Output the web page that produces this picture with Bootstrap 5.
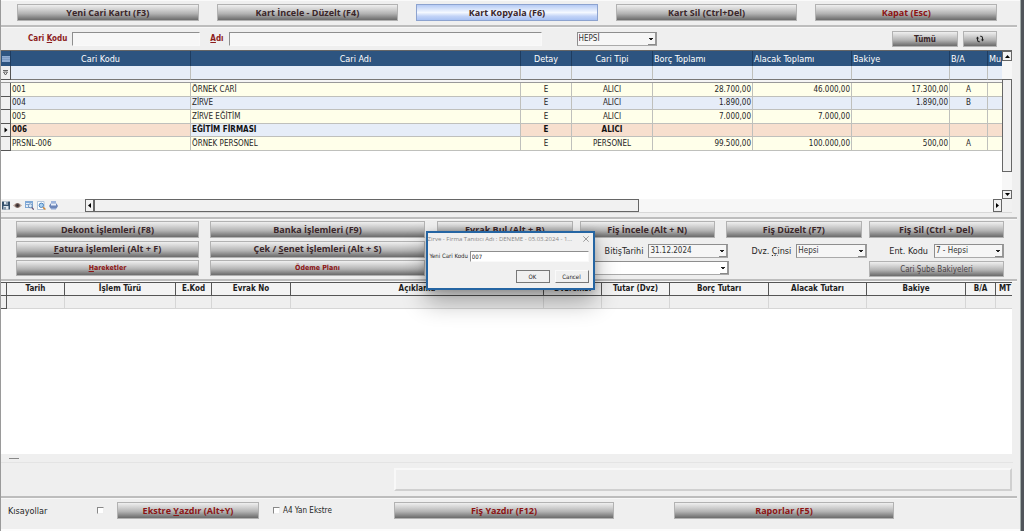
<!DOCTYPE html>
<html lang="tr">
<head>
<meta charset="utf-8">
<meta name="viewport" content="width=device-width, initial-scale=1">
<title>Cari Kartlar</title>
<link href="https://cdn.jsdelivr.net/npm/bootstrap@5.3.0/dist/css/bootstrap.min.css" rel="stylesheet">
<style>
:root{--ui:"DejaVu Sans Condensed","DejaVu Sans",sans-serif;--cap:"Open Sans","Noto Sans",sans-serif}
body{font-family:var(--ui);font-size:8px;line-height:12px;color:#262626;background:#efefef}
.app{border-left:1px solid #9a9a9a;border-right:3px solid #50555a;box-shadow:inset -1px 0 #a3adab,inset 0 -2px #fcfcfc,inset 0 1px #fafafa}
.rule{height:3px;margin-right:4px;border-top:2px solid #bdbdbd;border-bottom:1px solid #f8f8f8;flex:none}
/* metallic push buttons */
.metal{font:700 9px/14px var(--cap);height:17px;padding:0;border:1px solid #b2b2b2;border-radius:0;color:#3a2629;
 background:linear-gradient(#efefef,#d6d6d6 25%,#b2b2b2 58%,#7e7e7e 88%,#6c6c6c);white-space:nowrap;overflow:hidden}
.metal:hover{color:#3a2629;border-color:#999}
.metal.red,.metal.red:hover{color:#8c1414}
.metal.blue{background:linear-gradient(#b6cbf5,#dbe6fb 30%,#f4f8ff 50%,#c2d3f7 75%,#a9c2f3);border-color:#8da3cf}
.metal.thin{font:700 7px/13px var(--ui);height:16px}
.metal.plain{font-weight:400;font-size:8px;color:#4a4245}
.metal.mid{font-size:8px}
.top-grid{display:grid;grid-template-columns:repeat(5,1fr);column-gap:18px;padding:4px 24px 4px 16px}
/* sunken fields */
.field,.pick{height:14px;padding:0 1px;font:8px/12px var(--ui);color:#333;background:#f7f7f7;border:1px solid #8e8e8e;border-right-color:#f9f9f9;border-bottom-color:#f9f9f9;border-radius:0;min-width:0;outline:0}
.pick{appearance:none;border-right-color:#999;border-bottom-color:#aaa;
 background:linear-gradient(#222,#222) right 3px top 5px/4px 1px no-repeat,linear-gradient(#222,#222) right 4px top 6px/2px 1px no-repeat,linear-gradient(#888,#888) right 0 bottom 0/8px 1px no-repeat,linear-gradient(#999,#999) right 0 top 0/1px 100% no-repeat,#f6f6f6}
.pick.white{background-color:#fff}
.lbl{white-space:nowrap}
.lbl-red{font-weight:700;color:#8c1c1c}
.lbl-9{font-size:9px}
/* account list */
.list-pane{display:grid;grid-template-columns:minmax(0,1fr) 10px;grid-template-rows:148px 13px;margin-right:9px;border-top:1px solid #666;border-bottom:1px solid #d8d8d8}
.sheet{width:100%;table-layout:fixed;border-collapse:separate;border-spacing:0}
.sheet th,.sheet td{padding:0 1px;overflow:hidden;white-space:nowrap;height:13px;line-height:12px;border-right:1px solid #bfc0bc;border-bottom:1px solid #bfc0bc}
.sheet th:last-child,.sheet td:last-child{border-right:0}
.accounts th{height:15px;line-height:14px;font-size:9px;font-weight:400;color:#fff;background:#2d5480;border-color:#1e3c60;border-bottom-width:0}
.accounts .sift td{height:14px;background:#e6edf8;border-bottom-color:#777}
.accounts .gap td{height:3px;background:#f5f5f5;border-right:0;line-height:1px;border-bottom-color:#999}
.accounts tbody tr:nth-child(odd){background:#ffffea}
.accounts tbody tr:nth-child(even){background:#e6edf8}
.accounts tbody td{line-height:13px;height:14px}
.accounts tbody tr:nth-child(even) td{height:13px;line-height:12px}
.accounts tbody tr.now td{background:#f7dfce;font-weight:700;color:#111}
.accounts tbody tr.now td.cool{background:#e6edf8}
.sheet td.knob,.accounts tbody tr.now td.knob{background:#f0f0f0;border-color:#555;padding:0;text-align:center;font-size:6px}
.sheet svg,.tools svg,.sb svg{display:block;margin:auto}
.sb{display:flex;align-items:center;border:1px solid #666;background:#f1f1f1;flex:none;padding:0}
.tools{background:#f1f1f1}
/* movements */
.acts{display:grid;grid-template-columns:183px 215px;gap:2px 11px;flex:none}
.quad{display:flex;gap:7px}
.quad .metal{flex:1 1 0}
.moves th{height:13px;line-height:12px;font-weight:700;color:#1c1c1c;background:#f3f3f3;text-align:center;border-color:#555}
.moves td{background:#efefef;border-color:#d6d6d6}
.groove{height:23px;border:2px solid #d0d0d0;border-top-color:#f8f8f8;border-left-color:#f8f8f8}
.tick{appearance:none;width:7px;height:7px;margin:0;background:#fff;border:1px solid #888;border-right-color:#eee;border-bottom-color:#eee;border-radius:0}
/* dialog */
.ask{position:absolute;top:231px;left:0;right:2px;width:169px;margin:0 auto;background:#f0f0f0;border:2px solid #2565a3;box-shadow:0 12px 24px rgba(0,0,0,.32),0 2px 8px rgba(0,0,0,.2);font-size:6px;z-index:5}
.ask header{font:6px/12px var(--cap);color:#888}
.ask .field{height:11px;font-size:6px;line-height:9px;background:#fff;color:#222}
.ask .btn{font:6px/10px var(--ui);height:13px;width:34px;padding:0;border-radius:0;background:#f0f0f0;color:#222;border:1px solid #fafafa;border-right-color:#777;border-bottom-color:#777}
.ask .btn.main{border-color:#777}
</style>
</head>
<body>
<div class="app min-vh-100 d-flex flex-column position-relative overflow-hidden">
  <nav class="top-grid">
    <button class="btn metal">Yeni Cari Kartı (F3)</button>
    <button class="btn metal">Kart İncele - Düzelt (F4)</button>
    <button class="btn metal blue">Kart Kopyala (F6)</button>
    <button class="btn metal">Kart Sil (Ctrl+Del)</button>
    <button class="btn metal red">Kapat (Esc)</button>
  </nav>
  <div class="rule"></div>
  <form class="d-flex align-items-center" style="padding:3px 24px 3px 27px">
    <label class="lbl lbl-red" for="kod">Cari <u>K</u>odu</label>
    <input id="kod" class="field" style="width:128px;margin-left:5px">
    <label class="lbl lbl-red" for="adi" style="margin-left:10px"><u>A</u>dı</label>
    <input id="adi" class="field" style="width:313px;margin-left:5px">
    <select class="pick" aria-label="Cari tipi" style="width:80px;margin-left:35px"><option>HEPSİ</option></select>
    <button type="button" class="btn metal thin mid ms-auto" style="width:66px">Tümü</button>
    <button type="button" class="btn metal thin" style="width:34px;margin-left:5px" aria-label="Yenile">
      <svg width="8" height="8" viewBox="0 0 8 8" fill="none" stroke="#1d1d1d" stroke-width="1.1" class="d-block mx-auto"><path d="M3.800 6.700H3Q1.500 6.500 1.500 5V3M4.200 1.300H5Q6.500 1.500 6.500 3v2"/><path d="M0 3.500 1.500 1.500 3 3.500zM5 4.500 6.500 6.500 8 4.500z" fill="#1d1d1d" stroke="none"/></svg>
    </button>
  </form>

  <section class="list-pane">
    <div class="bg-white overflow-hidden">
      <table class="sheet accounts">
        <colgroup><col style="width:10px"><col style="width:180px"><col><col style="width:51px"><col style="width:81px"><col style="width:100px"><col style="width:99px"><col style="width:98px"><col style="width:38px"><col style="width:14px"></colgroup>
        <thead>
          <tr><th class="p-0"><svg width="8" height="6" viewBox="0 0 8 6"><path fill="#8fabd0" d="M0 0h8v6H0z"/><path stroke="#7b9ac3" d="M0 1.500h8M0 3.500h8"/></svg></th><th class="text-center">Cari Kodu</th><th class="text-center">Cari Adı</th><th class="text-center">Detay</th><th class="text-center">Cari Tipi</th><th>Borç Toplamı</th><th>Alacak Toplamı</th><th>Bakiye</th><th>B/A</th><th>Mu</th></tr>
          <tr class="sift"><td class="knob"><svg width="5" height="6" viewBox="0 0 5 6" fill="none" stroke="#444" stroke-width=".8"><path d="M0 .5h5M.5 2h4L2.500 5z"/></svg></td><td></td><td></td><td></td><td></td><td></td><td></td><td></td><td></td><td></td></tr>
          <tr class="gap"><td colspan="10"></td></tr>
        </thead>
        <tbody>
          <tr><td class="knob"></td><td>001</td><td>ÖRNEK CARİ</td><td class="text-center">E</td><td class="text-center">ALICI</td><td class="text-end">28.700,00</td><td class="text-end">46.000,00</td><td class="text-end">17.300,00</td><td class="text-center">A</td><td></td></tr>
          <tr><td class="knob"></td><td>004</td><td>ZİRVE</td><td class="text-center">E</td><td class="text-center">ALICI</td><td class="text-end">1.890,00</td><td></td><td class="text-end">1.890,00</td><td class="text-center">B</td><td></td></tr>
          <tr><td class="knob"></td><td>005</td><td>ZİRVE EĞİTİM</td><td class="text-center">E</td><td class="text-center">ALICI</td><td class="text-end">7.000,00</td><td class="text-end">7.000,00</td><td></td><td></td><td></td></tr>
          <tr class="now"><td class="knob"><svg width="4" height="6" viewBox="0 0 4 6"><path d="M.5.5v5L3.500 3z"/></svg></td><td>006</td><td class="cool">EĞİTİM FİRMASI</td><td class="text-center">E</td><td class="text-center">ALICI</td><td></td><td></td><td></td><td></td><td></td></tr>
          <tr><td class="knob"></td><td>PRSNL-006</td><td>ÖRNEK PERSONEL</td><td class="text-center">E</td><td class="text-center">PERSONEL</td><td class="text-end">99.500,00</td><td class="text-end">100.000,00</td><td class="text-end">500,00</td><td class="text-center">A</td><td></td></tr>
        </tbody>
      </table>
    </div>
    <div class="d-flex flex-column" style="background:#f7f7f7">
      <div class="sb" style="height:10px"><svg width="5" height="3" viewBox="0 0 5 3"><path d="M0 3h5L2.500 0z"/></svg></div>
      <div class="sb" style="height:93px;margin-top:18px"></div>
      <div class="sb mt-auto" style="height:9px"><svg width="5" height="3" viewBox="0 0 5 3"><path d="M0 0h5L2.500 3z"/></svg></div>
    </div>
    <div class="d-flex" style="background:#f7f7f7">
      <div class="tools d-flex align-items-center" style="width:84px;gap:3px;padding-left:1px">
        <svg width="8" height="9" viewBox="0 0 8 9" class="m-0"><path fill="#34506c" d="M0 .5h8v8H0z"/><path fill="#dfe8f1" d="M2 .5h4v3H2zM1.500 5h5v3.500h-5z"/><path fill="#34506c" d="M4.500 1h1v2h-1zM2.500 6h1v2.500h-1z"/></svg>
        <svg width="9" height="7" viewBox="0 0 9 7" class="m-0"><path fill="#b9a59b" d="M0 3.500Q4.500-1.500 9 3.500 4.500 8 0 3.500z"/><circle cx="4.500" cy="3.500" r="2.300" fill="#5d4a48"/><circle cx="4.500" cy="3.500" r="1" fill="#26262e"/></svg>
        <svg width="9" height="9" viewBox="0 0 9 9" class="m-0"><path fill="#7fa8d6" d="M0 0h8v7H0z"/><path fill="#e5eef8" d="M1 2h6v1H1zM1 4h3v2H1z"/><circle cx="5.300" cy="4.800" r="2" fill="#dcebf8" stroke="#5f82ad" stroke-width=".8"/><path stroke="#6b5a78" stroke-width="1.300" d="m6.800 6.500 2 2.200"/></svg>
        <svg width="9" height="9" viewBox="0 0 9 9" class="m-0"><path fill="#fff" stroke="#9fb6d1" stroke-width=".8" d="M.5.5h6.500v8H.5z"/><circle cx="4.300" cy="4.300" r="2.200" fill="#a9d0f0" stroke="#4d83bd"/><path stroke="#cf8a3c" stroke-width="1.400" d="m6 6.200 2.400 2.400"/></svg>
        <svg width="9" height="9" viewBox="0 0 9 9" class="m-0"><path fill="#9db4dc" d="M2 0h5v3H2z"/><path fill="#6c85b8" d="M1.500 2.500h6L9 5 7.500 7.500h-6L0 5z"/><path fill="#e9effa" d="M2 2.500h5v2H2z"/><path fill="#8ea4d0" d="M2 7h5v1.500H2z"/></svg>
      </div>
      <div class="sb" style="width:9px"><svg width="3" height="5" viewBox="0 0 3 5"><path d="M3 0v5L0 2.500z"/></svg></div>
      <div class="sb" style="width:54.400%"></div>
      <div class="sb ms-auto" style="width:9px"><svg width="3" height="5" viewBox="0 0 3 5"><path d="M0 0v5l3-2.500z"/></svg></div>
    </div>
    <div style="background:#f1f1f1"></div>
  </section>

  <div class="rule" style="margin-top:4px"></div>
  <section class="d-flex" style="padding:1px 17px 2px 15px;gap:12px">
    <div class="acts">
      <button class="btn metal">Dekont İşlemleri (F8)</button>
      <button class="btn metal">Banka İşlemleri (F9)</button>
      <button class="btn metal"><u>F</u>atura İşlemleri (Alt + F)</button>
      <button class="btn metal">Çek / <u>S</u>enet İşlemleri (Alt + S)</button>
      <button class="btn metal thin red"><u>H</u>areketler</button>
      <button class="btn metal thin red">Ödeme Planı</button>
    </div>
    <div class="flex-grow-1">
      <div class="quad">
        <button class="btn metal">Evrak Bul (Alt + B)</button>
        <button class="btn metal me-1">Fiş İncele (Alt + N)</button>
        <button class="btn metal">Fiş Düzelt (F7)</button>
        <button class="btn metal">Fiş Sil (Ctrl + Del)</button>
      </div>
      <div class="d-flex justify-content-end align-items-center" style="margin-top:6px">
        <label class="lbl lbl-9" for="bit">BitişTarihi</label>
        <select id="bit" class="pick" style="width:80px;margin-left:5px"><option>31.12.2024</option></select>
        <label class="lbl lbl-9" for="dvz" style="margin-left:23px">Dvz. <u>Ç</u>insi</label>
        <select id="dvz" class="pick" style="width:71px;margin-left:5px"><option>Hepsi</option></select>
        <label class="lbl lbl-9" for="ent" style="margin-left:22px">Ent. Kodu</label>
        <select id="ent" class="pick" style="width:70px;margin-left:6px"><option>7 - Hepsi</option></select>
      </div>
      <div class="d-flex justify-content-between" style="margin-top:3px">
        <select class="pick white" aria-label="Filtre" style="width:292px"><option></option></select>
        <button class="btn metal thin plain" style="width:135px">Cari Şube Bakiyeleri</button>
      </div>
    </div>
  </section>
  <div class="rule"></div>

  <section class="bg-white flex-grow-1" style="margin-right:9px">
    <table class="sheet moves" style="border-top:1px solid #555">
      <colgroup><col style="width:6px"><col style="width:58px"><col style="width:111px"><col style="width:36px"><col style="width:79px"><col><col style="width:58px"><col style="width:68px"><col style="width:99px"><col style="width:98px"><col style="width:99px"><col style="width:30px"><col style="width:16px"></colgroup>
      <thead><tr><th></th><th>Tarih</th><th>İşlem Türü</th><th>E.Kod</th><th>Evrak No</th><th>Açıklama</th><th>Dvz.Cinsi</th><th>Tutar (Dvz)</th><th>Borç Tutarı</th><th>Alacak Tutarı</th><th>Bakiye</th><th>B/A</th><th class="text-end">MT</th></tr></thead>
      <tbody><tr><td class="knob"></td><td></td><td></td><td></td><td></td><td></td><td></td><td></td><td></td><td></td><td></td><td></td><td></td></tr></tbody>
    </table>
  </section>
  <div style="height:9px;padding:4px 8px;margin-right:8px;border-bottom:1px solid #e4e4e4"><div style="width:10px;height:1px;background:#888"></div></div>
  <div class="groove" style="margin:5px 9px 5px 38.500%"></div>
  <div class="rule"></div>
  <footer class="d-flex align-items-center" style="padding:3px 16px 12px 7px">
    <label class="lbl lbl-9" for="kis" style="width:89px">Kısayollar</label>
    <input id="kis" type="checkbox" class="tick">
    <button class="btn metal red" style="width:142px;margin-left:13px">Ekstre <u>Y</u>azdır (Alt+Y)</button>
    <input id="a4" type="checkbox" class="tick" style="margin-left:14px">
    <label class="lbl" for="a4" style="margin-left:3px">A4 Yan Ekstre</label>
    <button class="btn metal red" style="width:220px;margin-left:auto">Fiş Yazdır (F12)</button>
    <button class="btn metal red" style="width:220px;margin-left:60px;margin-right:111px">Raporlar (F5)</button>
  </footer>

  <div class="ask" role="dialog" aria-label="Yeni Cari Kodu">
    <header class="d-flex align-items-center justify-content-between"><span class="lbl">Zirve - Firma Tanıtıcı Adı : DENEME - 05.03.2024 - 1...</span>
      <svg width="6" height="6" viewBox="0 0 6 6" stroke="#888" stroke-width=".8" style="margin-right:4px"><path d="m.3.3 5.400 5.400M5.700.3.3 5.700"/></svg></header>
    <div class="d-flex align-items-center" style="padding:5px 4px 0 2px">
      <label class="lbl" for="yeni">Yeni Cari Kodu</label><input id="yeni" class="field flex-grow-1" value="007" style="margin-left:2px">
    </div>
    <div class="d-flex justify-content-end" style="gap:5px;padding:8px 4px 5px"><button class="btn main">OK</button><button class="btn">Cancel</button></div>
  </div>
</div>
<script src="https://cdn.jsdelivr.net/npm/bootstrap@5.3.0/dist/js/bootstrap.bundle.min.js"></script>
</body>
</html>
